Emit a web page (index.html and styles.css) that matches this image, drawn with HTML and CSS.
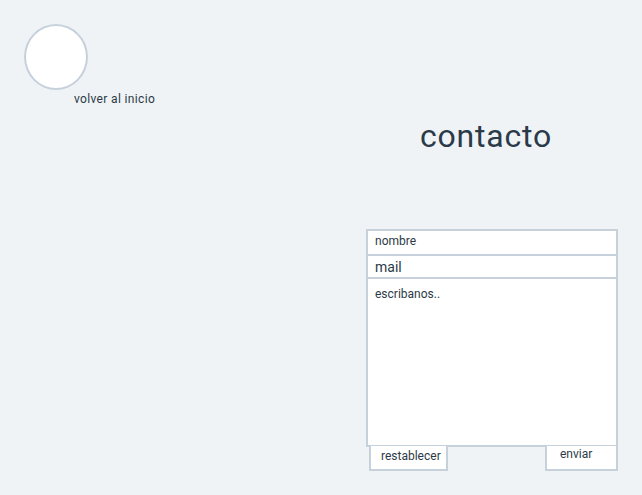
FILE: index.html
```html
<!DOCTYPE html>
<html lang="es">
<head>
<meta charset="utf-8">
<title>contacto</title>
<link rel="stylesheet" href="styles.css">
</head>
<body>
<header class="home">
  <a class="home-link" href="#">
    <span class="avatar"></span>
    <span class="home-label">volver al inicio</span>
  </a>
</header>
<main class="contact">
  <h1 class="title">contacto</h1>
  <form class="form">
    <input class="field field-name" type="text" placeholder="nombre">
    <input class="field field-mail" type="text" placeholder="mail">
    <textarea class="field field-msg" placeholder="escribanos.."></textarea>
    <div class="actions">
      <button class="btn btn-reset" type="reset">restablecer</button>
      <button class="btn btn-send" type="submit">enviar</button>
    </div>
  </form>
</main>
</body>
</html>
```
FILE: styles.css
```css
html, body {
  margin: 0;
  padding: 0;
}
body {
  background: #eff3f6;
  color: #2c3a47;
  font-family: Roboto, "Noto Sans", sans-serif;
  width: 642px;
  height: 495px;
  overflow: hidden;
}
.home {
  padding: 24px 0 0 24px;
}
.home-link {
  display: flex;
  flex-direction: column;
  align-items: flex-start;
  text-decoration: none;
  color: #2c3a47;
}
.avatar {
  display: block;
  width: 60px;
  height: 62px;
  border: 2px solid #c6d1dc;
  border-radius: 50%;
  background: #fff;
}
.home-label {
  font-size: 12px;
  line-height: 14px;
  letter-spacing: 0.35px;
  margin: 2px 0 0 50px;
}
.contact {
  display: flex;
  flex-direction: column;
  align-items: flex-start;
  padding-left: 366px;
}
.title {
  margin: 10px 0 0 54px;
  font-size: 32px;
  font-weight: 400;
  letter-spacing: 0.8px;
  line-height: 40px;
  color: #2b3a48;
}
.form {
  margin-top: 73px;
  width: 252px;
  display: flex;
  flex-direction: column;
}
.field {
  display: block;
  box-sizing: border-box;
  width: 252px;
  border: 2px solid #c6d1dc;
  background: #fff;
  margin: 0;
  padding: 0 7px;
  font-family: Roboto, "Noto Sans", sans-serif;
  color: #2c3a47;
  outline: none;
}
.field::placeholder {
  color: #2c3a47;
  opacity: 1;
}
.field-name {
  height: 27px;
  font-size: 12px;
  padding-bottom: 3px;
}
.field-mail {
  height: 25px;
  margin-top: -2px;
  font-size: 14px;
}
.field-msg {
  height: 170px;
  margin-top: -2px;
  resize: none;
  font-size: 12px;
  padding-top: 8px;
}
.actions {
  display: flex;
  justify-content: space-between;
  margin-top: -1px;
  padding-left: 3px;
}
.btn {
  box-sizing: border-box;
  height: 25px;
  border: 2px solid #c6d1dc;
  border-top: none;
  background: #fff;
  font-family: Roboto, "Noto Sans", sans-serif;
  font-size: 12px;
  color: #2c3a47;
  padding: 0 0 4px;
  margin: 0;
  text-align: left;
}
.btn-reset {
  width: 79px;
  padding-left: 10px;
}
.btn-send {
  width: 73px;
  padding-left: 13px;
  padding-bottom: 8px;
}
```
